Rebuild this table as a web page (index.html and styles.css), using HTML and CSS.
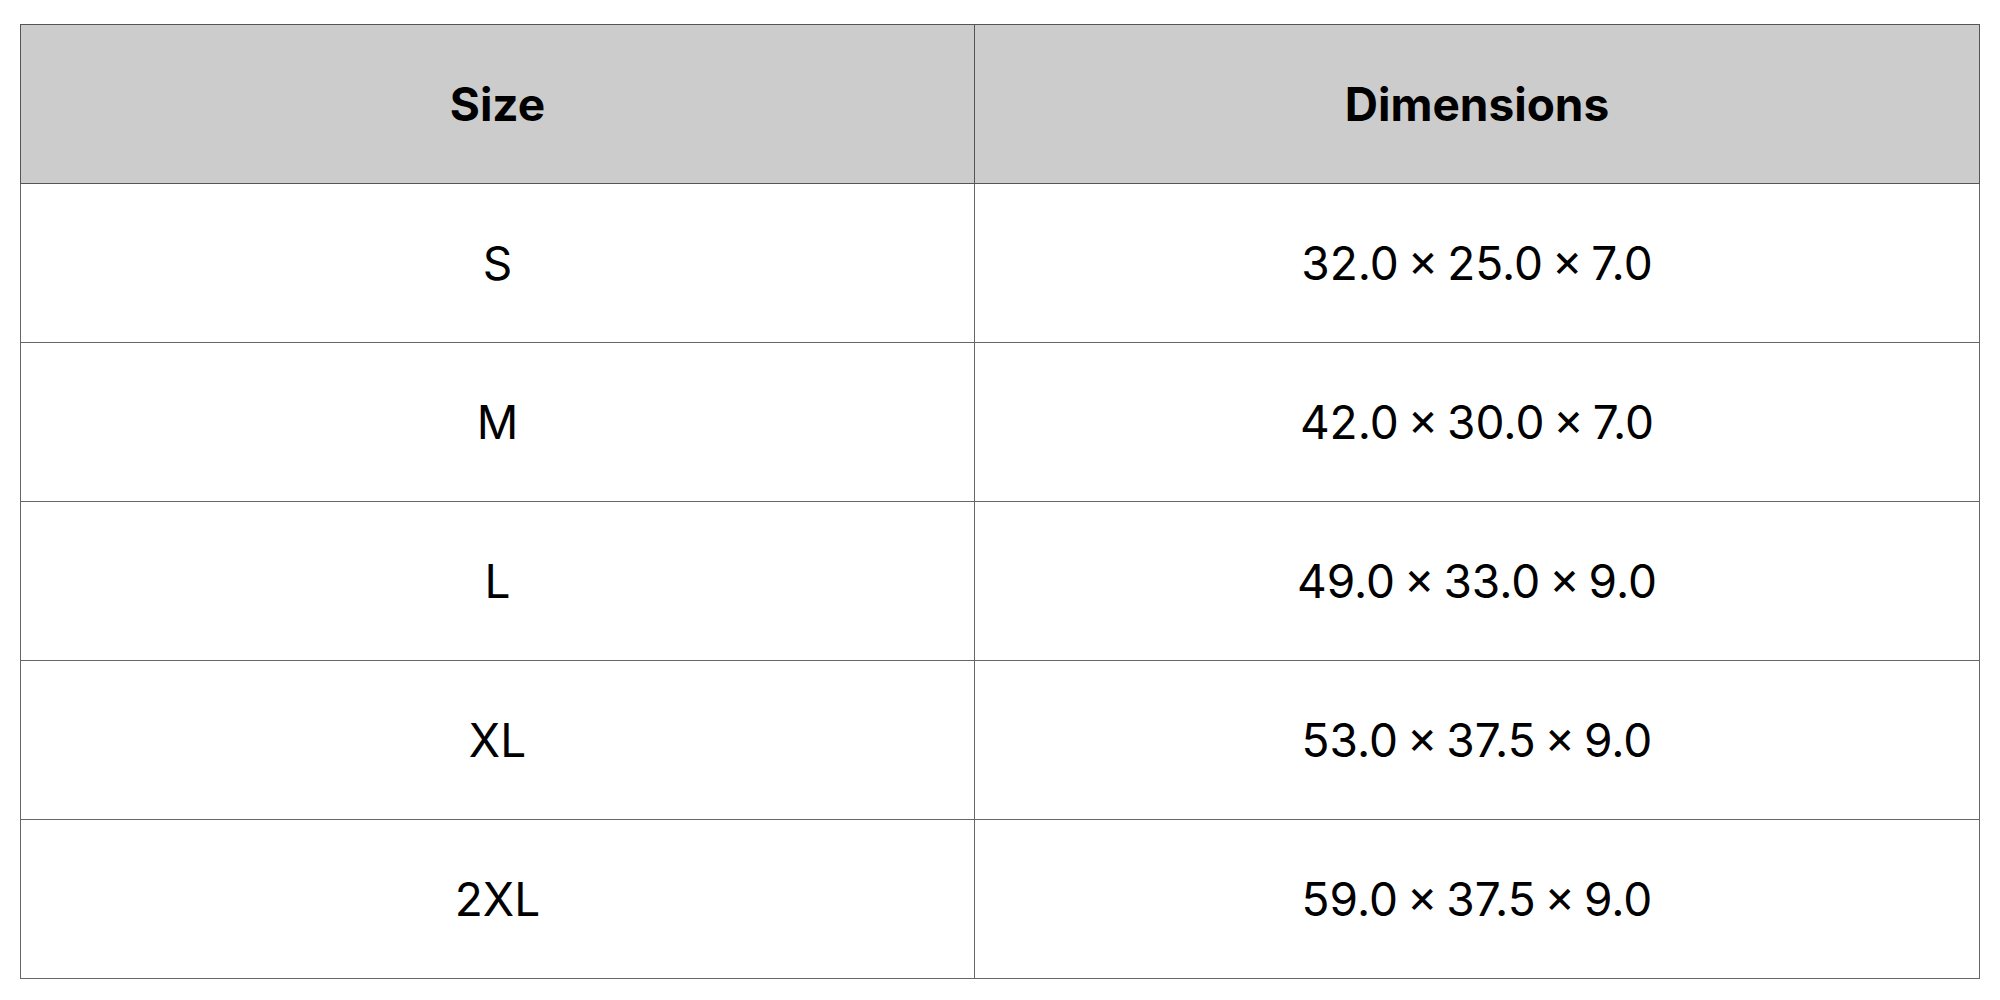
FILE: index.html
```html
<!DOCTYPE html>
<html>
<head>
<meta charset="utf-8">
<link rel="stylesheet" href="styles.css">
</head>
<body>
<table class="size-table">
  <thead>
    <tr><th class="col-size">Size</th><th class="col-dim">Dimensions</th></tr>
  </thead>
  <tbody>
    <tr><td>S</td><td class="dim">32.0 × 25.0 × 7.0</td></tr>
    <tr><td>M</td><td class="dim">42.0 × 30.0 × 7.0</td></tr>
    <tr><td>L</td><td class="dim">49.0 × 33.0 × 9.0</td></tr>
    <tr><td>XL</td><td class="dim">53.0 × 37.5 × 9.0</td></tr>
    <tr><td>2XL</td><td class="dim">59.0 × 37.5 × 9.0</td></tr>
  </tbody>
</table>
</body>
</html>
```
FILE: styles.css
```css
html, body {
  margin: 0;
  padding: 0;
  background: #ffffff;
}
body {
  padding: 24px 20px 0 20px;
  font-family: Inter, "Noto Sans", sans-serif;
  color: #000;
}
.size-table {
  width: 1960px;
  border-collapse: collapse;
  table-layout: fixed;
}
.col-size { width: 953px; }
.size-table th,
.size-table td {
  border: 1px solid #666;
  height: 158px;
  padding: 0;
  text-align: center;
  vertical-align: middle;
  font-size: 46px;
}
.size-table th {
  background: #cccccc;
  font-weight: 700;
  border-color: #555;
}
.size-table td {
  font-weight: 400;
}
.size-table td.dim {
  word-spacing: -4px;
}
```
